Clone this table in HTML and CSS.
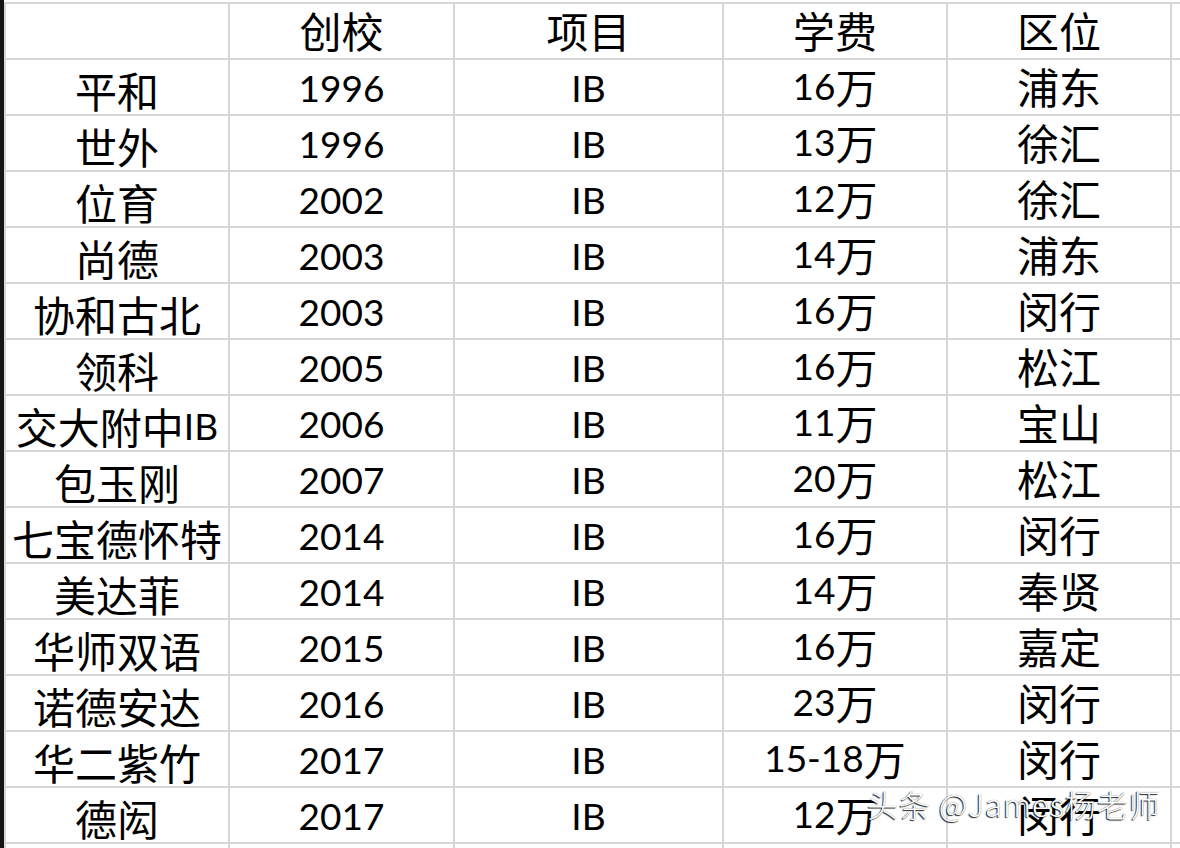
FILE: index.html
```html
<!DOCTYPE html>
<html lang="zh-CN">
<head>
<meta charset="utf-8">
<title>上海IB学校</title>
<link rel="stylesheet" href="styles.css">
</head>
<body>
<div class="page">
  <div class="edge"></div>
  <div class="sheet">
    <div class="c name"></div><div class="c">创校</div><div class="c">项目</div><div class="c">学费</div><div class="c">区位</div><div class="c"></div>
    <div class="c name">平和</div><div class="c lat">1996</div><div class="c lat">IB</div><div class="c"><span class="lat">16</span>万</div><div class="c">浦东</div><div class="c"></div>
    <div class="c name">世外</div><div class="c lat">1996</div><div class="c lat">IB</div><div class="c"><span class="lat">13</span>万</div><div class="c">徐汇</div><div class="c"></div>
    <div class="c name">位育</div><div class="c lat">2002</div><div class="c lat">IB</div><div class="c"><span class="lat">12</span>万</div><div class="c">徐汇</div><div class="c"></div>
    <div class="c name">尚德</div><div class="c lat">2003</div><div class="c lat">IB</div><div class="c"><span class="lat">14</span>万</div><div class="c">浦东</div><div class="c"></div>
    <div class="c name">协和古北</div><div class="c lat">2003</div><div class="c lat">IB</div><div class="c"><span class="lat">16</span>万</div><div class="c">闵行</div><div class="c"></div>
    <div class="c name">领科</div><div class="c lat">2005</div><div class="c lat">IB</div><div class="c"><span class="lat">16</span>万</div><div class="c">松江</div><div class="c"></div>
    <div class="c name">交大附中<span class="lat">IB</span></div><div class="c lat">2006</div><div class="c lat">IB</div><div class="c"><span class="lat">11</span>万</div><div class="c">宝山</div><div class="c"></div>
    <div class="c name">包玉刚</div><div class="c lat">2007</div><div class="c lat">IB</div><div class="c"><span class="lat">20</span>万</div><div class="c">松江</div><div class="c"></div>
    <div class="c name">七宝德怀特</div><div class="c lat">2014</div><div class="c lat">IB</div><div class="c"><span class="lat">16</span>万</div><div class="c">闵行</div><div class="c"></div>
    <div class="c name">美达菲</div><div class="c lat">2014</div><div class="c lat">IB</div><div class="c"><span class="lat">14</span>万</div><div class="c">奉贤</div><div class="c"></div>
    <div class="c name">华师双语</div><div class="c lat">2015</div><div class="c lat">IB</div><div class="c"><span class="lat">16</span>万</div><div class="c">嘉定</div><div class="c"></div>
    <div class="c name">诺德安达</div><div class="c lat">2016</div><div class="c lat">IB</div><div class="c"><span class="lat">23</span>万</div><div class="c">闵行</div><div class="c"></div>
    <div class="c name">华二紫竹</div><div class="c lat">2017</div><div class="c lat">IB</div><div class="c"><span class="lat">15-18</span>万</div><div class="c">闵行</div><div class="c"></div>
    <div class="c name">德闳</div><div class="c lat">2017</div><div class="c lat">IB</div><div class="c"><span class="lat">12</span>万</div><div class="c">闵行</div><div class="c"></div>
    <div class="c name"></div><div class="c"></div><div class="c"></div><div class="c"></div><div class="c"></div><div class="c"></div>
  </div>
  <div class="watermark">头条 @James杨老师</div>
</div>
</body>
</html>
```

FILE: styles.css
```css
html, body {
  margin: 0;
  padding: 0;
  width: 1180px;
  height: 848px;
  overflow: hidden;
  background: #fff;
}

.page {
  position: relative;
  display: flex;
  width: 1180px;
  height: 848px;
  overflow: hidden;
  font-family: "Noto Sans CJK SC", sans-serif;
  color: #000;
}

.edge {
  flex: 0 0 4px;
  background: #151515;
}

.sheet {
  margin-top: 2px;
  padding: 2px 0 0 2px;
  display: grid;
  grid-template-columns: 222px 223px 267px 222px 222px 20px;
  grid-auto-rows: 54px;
  gap: 2px;
  background: #d6d6d6;
  align-self: flex-start;
}

.c {
  background: #fff;
  display: flex;
  align-items: center;
  justify-content: center;
  font-size: 42px;
  line-height: 42px;
  white-space: nowrap;
  padding-bottom: 2px;
  box-sizing: border-box;
}

.c.name {
  padding-bottom: 0;
  padding-top: 5px;
}

.lat {
  font-family: Lato, "Noto Sans CJK SC", sans-serif;
  font-size: 37px;
}

.c.lat {
  padding-bottom: 0;
  padding-top: 2px;
}

.watermark {
  position: absolute;
  left: 867px;
  top: 784px;
  font-family: "Noto Sans CJK SC", sans-serif;
  font-weight: 300;
  font-size: 31px;
  line-height: 40px;
  letter-spacing: 1px;
  color: #fff;
  text-shadow: -1px 1px 1px rgba(0, 0, 0, 0.85), 0 0 1px rgba(0, 0, 0, 0.6);
  white-space: nowrap;
}
```
